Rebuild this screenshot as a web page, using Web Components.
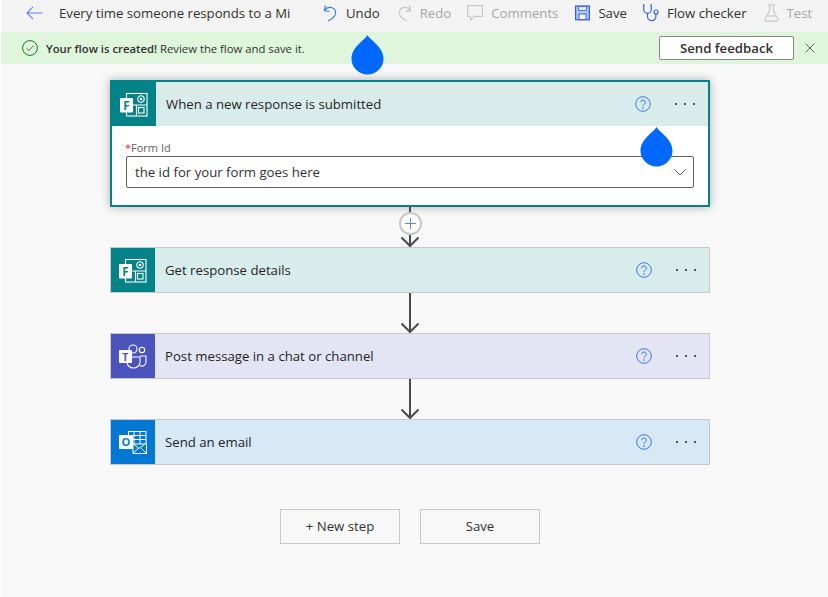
<!DOCTYPE html>
<html>
<head>
<meta charset="utf-8">
<title>Flow</title>
<style>
  html, body { margin: 0; padding: 0; }
  body { width: 828px; height: 597px; overflow: hidden; background: #fff; font-family: "Open Sans", "Noto Sans", sans-serif; }
</style>
</head>
<body>
<flow-page>
  <flow-toolbar></flow-toolbar>
  <flow-banner></flow-banner>
  <flow-canvas>
    <flow-card active title-text="When a new response is submitted" kind="forms">
      <form-field label="Form Id" value="the id for your form goes here"></form-field>
    </flow-card>
    <flow-connector plus></flow-connector>
    <flow-card title-text="Get response details" kind="forms"></flow-card>
    <flow-connector></flow-connector>
    <flow-card title-text="Post message in a chat or channel" kind="teams"></flow-card>
    <flow-connector></flow-connector>
    <flow-card title-text="Send an email" kind="outlook"></flow-card>
    <flow-actions></flow-actions>
  </flow-canvas>
  <drop-marker style="left:351px;top:35px"></drop-marker>
  <drop-marker style="left:640px;top:127px"></drop-marker>
</flow-page>

<script>
const FORMS_ICON = `<svg width="28" height="25" viewBox="0 0 28 25" fill="none" stroke="#fff" stroke-width="1.1">
  <rect x="6.5" y="1.5" width="20.5" height="22.5"/>
  <path d="M6.5 13H27M16.5 13V24"/>
  <circle cx="21" cy="7" r="3.2"/><circle cx="21" cy="7" r="1.3" fill="#fff" stroke="none"/>
  <rect x="18.5" y="15.5" width="5.5" height="5.5"/>
  <rect x="0" y="6" width="13" height="14.5" rx="1" fill="#fff" stroke="none"/>
  <text x="3.2" y="17.5" font-family="Open Sans" font-weight="700" font-size="11.5" fill="#038387" stroke="none">F</text>
</svg>`;

const TEAMS_ICON = `<svg width="28" height="25" viewBox="0 0 28 25" fill="none" stroke="#fff" stroke-width="1.1">
  <circle cx="14" cy="5" r="4"/>
  <circle cx="23" cy="6" r="2.7"/>
  <path d="M8 13H21V18a6.5 6 0 0 1-13 0Z"/>
  <path d="M21 12H27V18a4 4 0 0 1-6 3.5"/>
  <rect x="0" y="6" width="13" height="13" rx="1" fill="#fff" stroke="none"/>
  <text x="3.2" y="16.5" font-family="Open Sans" font-weight="700" font-size="10.5" fill="#4b53bc" stroke="none">T</text>
</svg>`;

const OUTLOOK_ICON = `<svg width="28" height="25" viewBox="0 0 28 25" fill="none" stroke="#fff" stroke-width="1">
  <rect x="9.5" y="1.5" width="17.5" height="12.5"/>
  <path d="M15 1.5V14M21 1.5V14M9.5 5.5H27M9.5 9.5H27"/>
  <path d="M14 13.5V23.5H27.5V13L20 18.5Z" fill="#0078d4"/>
  <path d="M14 23.5L19.5 18M27.5 23.5L22 18"/>
  <rect x="0" y="5" width="14" height="14" rx="1" fill="#fff" stroke="none"/>
  <text x="2.6" y="16" font-family="Open Sans" font-weight="700" font-size="11" fill="#0078d4" stroke="none">O</text>
</svg>`;

const TOOL_ICONS = {
  undo: `<svg width="15" height="18" viewBox="0 0 15 18" fill="none" stroke="#3f74ee" stroke-width="1.1"><path d="M2.5 1.5L1.3 6.5 6.5 7.5"/><path d="M1.5 6.5C3 4 6 3 8.5 3.5 12.5 4.5 13.5 8.5 12 11.5 10.5 14 8 15.5 5 17"/></svg>`,
  redo: `<svg width="16" height="18" viewBox="0 0 16 18" fill="none" stroke="#c8c8c8" stroke-width="1.3"><path d="M13.5 1.5L14.7 6.5 9.5 7.5"/><path d="M14.5 6.5C13 4 10 3 7.5 3.5 3.5 4.5 2.5 8.5 4 11.5 5.5 14 8 15.5 11 17"/></svg>`,
  comments: `<svg width="16" height="16" viewBox="0 0 16 16" fill="none" stroke="#c8c8c8" stroke-width="1.2"><path d="M.6.6H15.4V11.4H7.5L3.5 15V11.4H.6Z"/></svg>`,
  save: `<svg width="16" height="16" viewBox="0 0 16 16"><rect x="1.6" y="1" width="13.8" height="13.8" fill="#b4c7f5" stroke="#2f5fe8" stroke-width="1.2"/><rect x="4.5" y="1.5" width="8" height="4" fill="#e4ebfc" stroke="#2f5fe8" stroke-width=".8"/><rect x="5" y="9" width="7" height="5.6" fill="#fff" stroke="#2f5fe8"/></svg>`,
  checker: `<svg width="16" height="18" viewBox="0 0 16 18" fill="none" stroke="#3565ea" stroke-width="1.2"><path d="M2 1H.7V5.5a3.8 3.8 0 0 0 7.6 0V1H7"/><path d="M4.5 9.5V12.5a4.2 4.2 0 0 0 8.4 0V10"/><circle cx="13" cy="8" r="2"/></svg>`,
  test: `<svg width="16" height="18" viewBox="0 0 16 18" fill="none" stroke="#c8c8c8" stroke-width="1.2"><path d="M5 1H12M6.5 1V7L2 15a1.5 1.5 0 0 0 1.4 2.2H13.6a1.5 1.5 0 0 0 1.4-2.2L10.5 7V1"/><path d="M4.5 12H12.5"/></svg>`
};

class FlowPage extends HTMLElement {
  constructor() {
    super();
    this.attachShadow({ mode: "open" });
    this.shadowRoot.innerHTML = `
      <style>
        :host { display: flex; flex-direction: column; position: relative; width: 828px; height: 597px; overflow: hidden; }
      </style>
      <slot></slot>`;
  }
}

class ToolButton extends HTMLElement {
  constructor() {
    super();
    this.attachShadow({ mode: "open" });
    const icon = TOOL_ICONS[this.getAttribute("icon")];
    this.shadowRoot.innerHTML = `
      <style>
        :host { display: flex; align-items: center; gap: 8px; font-size: 13.2px; color: #323130; white-space: nowrap; }
        :host([disabled]) { color: #a6a6a6; }
        svg { display: block; }
      </style>
      ${icon}<span><slot></slot></span>`;
  }
}

class FlowToolbar extends HTMLElement {
  constructor() {
    super();
    this.attachShadow({ mode: "open" });
    this.shadowRoot.innerHTML = `
      <style>
        :host { display: flex; align-items: center; height: 32px; padding: 0 0 6px 25px; box-sizing: border-box; background: #f3f3f3; margin-left: 1px; }
        .back { display: block; margin-right: 16px; }
        .name { font-size: 13.2px; color: #323130; width: 248px; margin-right: 16px; flex: none; white-space: nowrap; overflow: hidden; }
        .tools { display: flex; align-items: center; gap: 16px; }
      </style>
      <svg class="back" width="17" height="14" viewBox="0 0 17 14" fill="none" stroke="#5b7ff0" stroke-width="1.1"><path d="M7 .8L1 7l6 6.2M1 7H16.5"/></svg>
      <span class="name">Every time someone responds to a Mi</span>
      <div class="tools">
        <tool-button icon="undo">Undo</tool-button>
        <tool-button icon="redo" disabled>Redo</tool-button>
        <tool-button icon="comments" disabled>Comments</tool-button>
        <tool-button icon="save">Save</tool-button>
        <tool-button icon="checker">Flow checker</tool-button>
        <tool-button icon="test" disabled>Test</tool-button>
      </div>`;
  }
}

class FlowBanner extends HTMLElement {
  constructor() {
    super();
    this.attachShadow({ mode: "open" });
    this.shadowRoot.innerHTML = `
      <style>
        :host { display: flex; align-items: center; height: 32px; padding: 0 13px 0 21px; box-sizing: border-box; background: #dff6dd; margin-left: 1px; font-size: 11.3px; color: #323130; }
        .check { display: block; margin-right: 8px; }
        b { font-weight: 600; }
        .grow { flex: 1; white-space: nowrap; }
        button { width: 135px; height: 24px; padding: 0; margin-right: 11px; background: #fff; border: 1px solid #8a8886; border-radius: 2px; font: 600 13.2px "Open Sans", sans-serif; color: #323130; }
        .close { display: block; }
      </style>
      <svg class="check" width="16" height="16" viewBox="0 0 16 16" fill="none"><circle cx="8" cy="8" r="7.4" stroke="#107c10"/><path d="M4.5 8.3L7 10.6 11.5 5.6" stroke="#605e5c"/></svg>
      <span class="grow"><b>Your flow is created!</b> Review the flow and save it.</span>
      <button>Send feedback</button>
      <svg class="close" width="10" height="10" viewBox="0 0 10 10" stroke="#605e5c"><path d="M.5.5L9.5 9.5M9.5.5L.5 9.5"/></svg>`;
  }
}

class FlowCanvas extends HTMLElement {
  constructor() {
    super();
    this.attachShadow({ mode: "open" });
    this.shadowRoot.innerHTML = `
      <style>
        :host { display: flex; flex-direction: column; align-items: center; flex: 1; padding: 16px 9px 0 0; background: #f8f8f8; margin-left: 1px; }
      </style>
      <slot></slot>`;
  }
}

class FlowCard extends HTMLElement {
  constructor() {
    super();
    this.attachShadow({ mode: "open" });
    const kind = this.getAttribute("kind");
    const icon = { forms: FORMS_ICON, teams: TEAMS_ICON, outlook: OUTLOOK_ICON }[kind];
    this.shadowRoot.innerHTML = `
      <style>
        :host { display: block; width: 600px; box-sizing: border-box; border: 1px solid #c8c8c8; background: #fff; }
        :host([active]) { border: 2px solid #038387; box-shadow: 0 0 9px rgba(0,0,0,.3); }
        :host([kind=forms]) { --head: #d9ecec; --tile: #038387; }
        :host([kind=teams]) { --head: #e4e5f4; --tile: #4b53bc; }
        :host([kind=outlook]) { --head: #d7e8f7; --tile: #0078d4; }
        .head { display: flex; align-items: center; height: 44px; background: var(--head); }
        .tile { display: flex; align-items: center; justify-content: center; width: 44px; height: 44px; background: var(--tile); }
        .tile svg { display: block; }
        .title { flex: 1; margin-left: 10px; font-size: 13.2px; color: #252423; white-space: nowrap; }
        .help { display: block; margin-right: 24px; }
        .dots { display: flex; gap: 6.5px; margin-right: 13px; }
        .dots i { width: 2.5px; height: 2.5px; border-radius: 50%; background: #252423; }
      </style>
      <div class="head">
        <div class="tile">${icon}</div>
        <span class="title">${this.getAttribute("title-text")}</span>
        <svg class="help" width="16" height="16" viewBox="0 0 16 16" fill="none" stroke="#3f74ee"><circle cx="8" cy="8" r="7.3"/><path d="M5.7 6.2A2.3 2.3 0 1 1 9.2 8.2C8.3 8.7 8 9.2 8 10.2"/><circle cx="8" cy="12" r=".4"/></svg>
        <div class="dots"><i></i><i></i><i></i></div>
      </div>
      <slot></slot>`;
  }
}

class FormField extends HTMLElement {
  constructor() {
    super();
    this.attachShadow({ mode: "open" });
    this.shadowRoot.innerHTML = `
      <style>
        :host { display: block; padding: 14px 14px 17px; }
        label { display: block; height: 16px; line-height: 15px; font-size: 11px; color: #605e5c; }
        label i { color: #d13438; font-style: normal; margin: 0 0 0 -1px; }
        .box { display: flex; align-items: center; justify-content: space-between; height: 32px; box-sizing: border-box; padding: 0 7px 0 8px; border: 1px solid #605e5c; border-radius: 2px; font-size: 13.2px; color: #323130; }
        svg { display: block; }
      </style>
      <label><i>*</i>${this.getAttribute("label")}</label>
      <div class="box"><span>${this.getAttribute("value")}</span>
        <svg width="12" height="7" viewBox="0 0 12 7" fill="none" stroke="#605e5c"><path d="M.5.5L6 6 11.5.5"/></svg>
      </div>`;
  }
}

class FlowConnector extends HTMLElement {
  constructor() {
    super();
    this.attachShadow({ mode: "open" });
    const plus = this.hasAttribute("plus") ? `
      <div class="plus"><svg width="11" height="11" viewBox="0 0 11 11" stroke="#5b84e8"><path d="M5.5 0V11M0 5.5H11"/></svg></div>` : "";
    this.shadowRoot.innerHTML = `
      <style>
        :host { display: block; position: relative; width: 20px; height: 40px; }
        svg.arrow { display: block; }
        .plus { position: absolute; left: -1.5px; top: 4.5px; width: 23px; height: 23px; box-sizing: border-box; border: 2px solid #c8c8c8; border-radius: 50%; background: #fff; display: flex; align-items: center; justify-content: center; }
        .plus svg { display: block; }
      </style>
      <svg class="arrow" width="20" height="40" viewBox="0 0 20 40" fill="none" stroke="#4a4a4a" stroke-width="2"><path d="M10 0V39M1.5 30.5L10 39 18.5 30.5"/></svg>${plus}`;
  }
}

class FlowActions extends HTMLElement {
  constructor() {
    super();
    this.attachShadow({ mode: "open" });
    this.shadowRoot.innerHTML = `
      <style>
        :host { display: flex; gap: 20px; margin-top: 44px; }
        button { width: 120px; height: 35px; padding: 0 0 2px; background: #f8f8f8; border: 1px solid #c8c8c8; font: 13.2px "Open Sans", sans-serif; color: #323130; }
      </style>
      <button>+ New step</button>
      <button>Save</button>`;
  }
}

class DropMarker extends HTMLElement {
  constructor() {
    super();
    this.attachShadow({ mode: "open" });
    this.shadowRoot.innerHTML = `
      <style>
        :host { display: block; position: absolute; width: 33px; height: 40px; }
        svg { display: block; }
      </style>
      <svg width="33" height="40" viewBox="0 0 33 40"><path d="M16.5 0C19 5 32.5 12 32.5 23.5A16 16 0 0 1 .5 23.5C.5 12 14 5 16.5 0Z" fill="#0068ff"/></svg>`;
  }
}

customElements.define("flow-page", FlowPage);
customElements.define("tool-button", ToolButton);
customElements.define("flow-toolbar", FlowToolbar);
customElements.define("flow-banner", FlowBanner);
customElements.define("flow-canvas", FlowCanvas);
customElements.define("flow-card", FlowCard);
customElements.define("form-field", FormField);
customElements.define("flow-connector", FlowConnector);
customElements.define("flow-actions", FlowActions);
customElements.define("drop-marker", DropMarker);
</script>
</body>
</html>
